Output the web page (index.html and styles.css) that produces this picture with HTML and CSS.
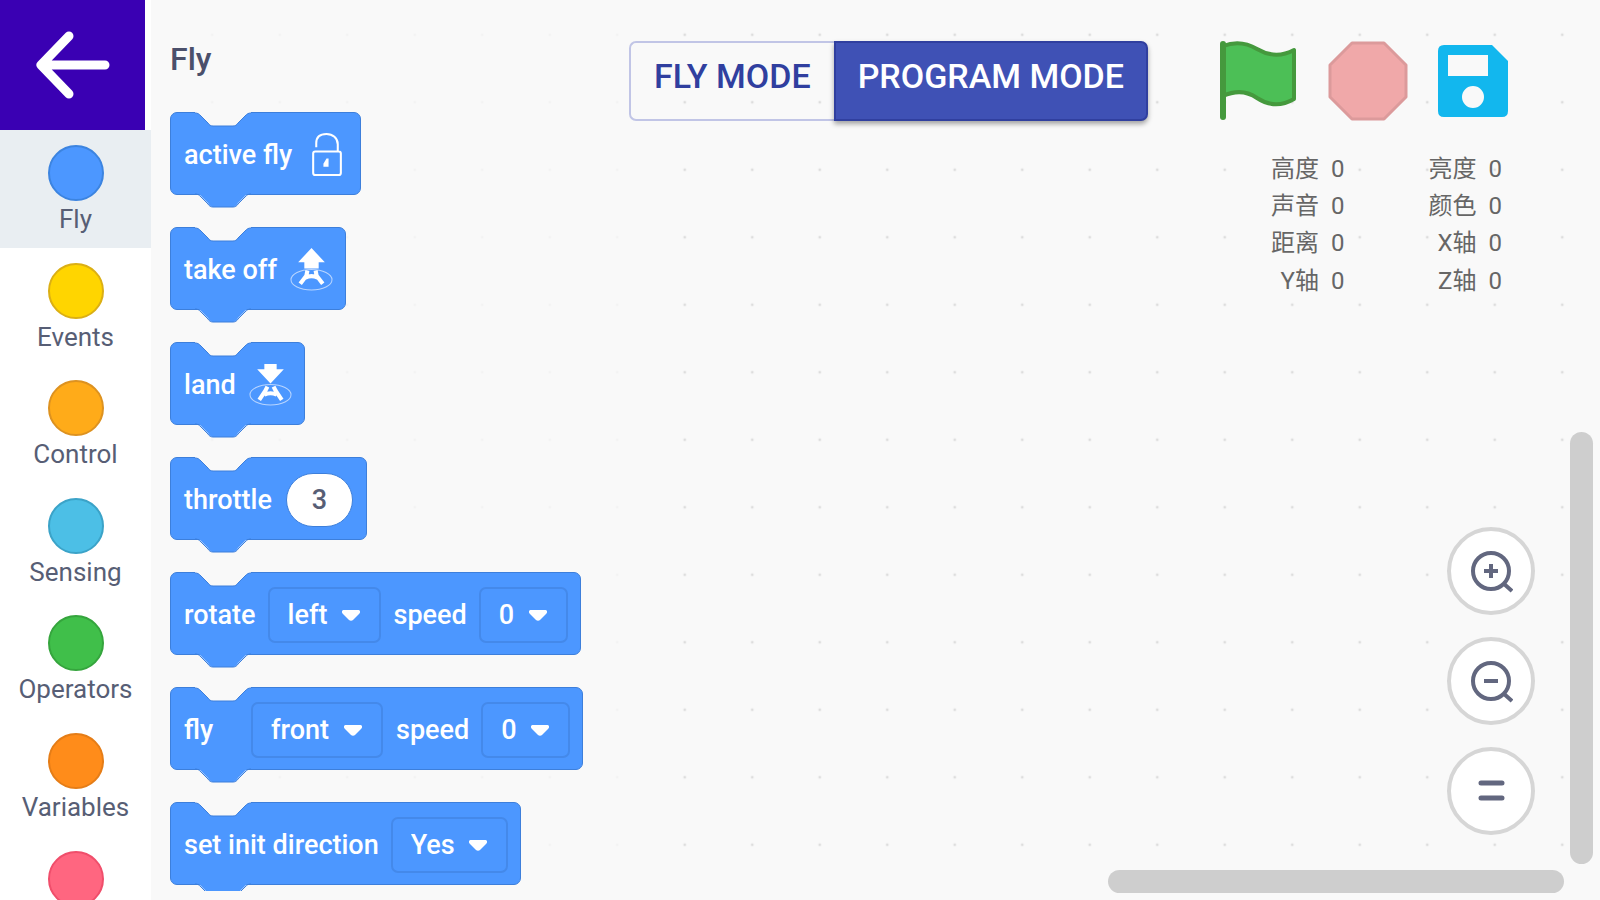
FILE: index.html
```html
<!DOCTYPE html>
<html lang="en">
<head>
  <meta charset="UTF-8">
  <meta name="viewport" content="width=device-width, initial-scale=1">
  <title>Program Mode</title>
  <link rel="stylesheet" href="styles.css">
</head>
<body>

<!-- shared shapes -->
<svg class="defs" aria-hidden="true">
  <symbol id="notch" viewBox="0 0 56 15">
    <path class="notch-fill" d="M0 0H56V1C53 1 52 2 50 4L43 11C42 13 40 14 38 14H18C16 14 14 13 13 11L6 4C4 2 3 1 0 1Z" />
    <path class="outline" d="M0 1C3 1 4 2 6 4L13 11C14 13 16 14 18 14H38C40 14 42 13 43 11L50 4C52 2 53 1 56 1" />
  </symbol>
  <symbol id="tab" viewBox="0 0 56 15">
    <path class="tab-fill" d="M0 0H56C53 0 52 1 50 3L43 10C42 12 40 14 38 14H18C16 14 14 12 13 10L6 3C4 1 3 0 0 0Z" />
    <path class="outline" d="M0 1C3 1 4 2 6 4L13 11C14 13 16 14 18 14H38C40 14 42 13 43 11L50 4C52 2 53 1 56 1" />
  </symbol>
  <symbol id="caret" viewBox="0 0 18 11">
    <path fill="#fff" d="M2 0H16C18 0 19 2 17 4L11 10C10 11 8 11 7 10L1 4C-1 2 0 0 2 0Z" />
  </symbol>
</svg>

<nav class="sidebar">
  <button class="back" aria-label="Back">
    <svg viewBox="0 0 76 68" width="76" height="68">
      <path d="M70 34H6M34 5L6 34L34 63" />
    </svg>
  </button>
  <ul class="categories">
    <li><button class="category selected"><span class="dot fly"></span>Fly</button></li>
    <li><button class="category"><span class="dot events"></span>Events</button></li>
    <li><button class="category"><span class="dot control"></span>Control</button></li>
    <li><button class="category"><span class="dot sensing"></span>Sensing</button></li>
    <li><button class="category"><span class="dot operators"></span>Operators</button></li>
    <li><button class="category"><span class="dot variables"></span>Variables</button></li>
    <li><button class="category" aria-label="My Blocks"><span class="dot my-blocks"></span></button></li>
  </ul>
</nav>

<main class="workspace">
  <svg class="grid" aria-hidden="true">
    <defs>
      <pattern id="dots" width="27" height="27" patternUnits="userSpaceOnUse" patternTransform="translate(-40 1) scale(2.5)">
        <rect x="13" y="13" width="1" height="1" fill="#ddd" />
      </pattern>
    </defs>
    <rect width="100%" height="100%" fill="url(#dots)" />
  </svg>

  <section class="flyout">
    <h2>Fly</h2>
    <div class="block">
      <svg class="notch"><use href="#notch" /></svg>
      <span>active fly</span>
      <svg class="icon" viewBox="0 0 40 40">
        <path fill="none" stroke="#fff" stroke-width="2" d="M10 13V9C10 3 14 0 20 0S31 4 31 10V17M9 17H32Q34 17 34 19V38Q34 40 32 40H9Q7 40 7 38V19Q7 17 9 17Z" />
        <path fill="#fff" d="M20 24H22V32H17V29Z" />
      </svg>
      <svg class="tab"><use href="#tab" /></svg>
    </div>
    <div class="block">
      <svg class="notch"><use href="#notch" /></svg>
      <span>take off</span>
      <svg class="icon" viewBox="0 0 40 40">
        <ellipse cx="20" cy="30" rx="20" ry="10" fill="none" stroke="#b8d5ff" stroke-width="1" />
        <path fill="#fff" d="M20 -1L33 13H27V19H13V13H7Z" />
        <path fill="none" stroke="#fff" stroke-width="4" d="M16 21L15 26L9 34M24 21L25 26L31 34M14 28Q20 25 26 28" />
      </svg>
      <svg class="tab"><use href="#tab" /></svg>
    </div>
    <div class="block">
      <svg class="notch"><use href="#notch" /></svg>
      <span>land</span>
      <svg class="icon" viewBox="0 0 40 40">
        <ellipse cx="20" cy="30" rx="20" ry="10" fill="none" stroke="#b8d5ff" stroke-width="1" />
        <path fill="#fff" d="M14 0H26V5H33L20 19L7 5H14Z" />
        <path fill="none" stroke="#fff" stroke-width="4" d="M17 22L15 26L9 35M23 22L25 26L31 35M14 30Q20 27 26 30" />
      </svg>
      <svg class="tab"><use href="#tab" /></svg>
    </div>
    <div class="block">
      <svg class="notch"><use href="#notch" /></svg>
      <label for="throttle">throttle</label>
      <input id="throttle" class="number" type="text" value="3">
      <svg class="tab"><use href="#tab" /></svg>
    </div>
    <div class="block">
      <svg class="notch"><use href="#notch" /></svg>
      <label for="rotate-dir">rotate</label>
      <span class="dropdown">
        <select id="rotate-dir"><option>left</option></select>
        <svg><use href="#caret" /></svg>
      </span>
      <label for="rotate-speed">speed</label>
      <span class="dropdown">
        <select id="rotate-speed"><option>0</option></select>
        <svg><use href="#caret" /></svg>
      </span>
      <svg class="tab"><use href="#tab" /></svg>
    </div>
    <div class="block">
      <svg class="notch"><use href="#notch" /></svg>
      <label class="short" for="fly-dir">fly</label>
      <span class="dropdown">
        <select id="fly-dir"><option>front</option></select>
        <svg><use href="#caret" /></svg>
      </span>
      <label for="fly-speed">speed</label>
      <span class="dropdown">
        <select id="fly-speed"><option>0</option></select>
        <svg><use href="#caret" /></svg>
      </span>
      <svg class="tab"><use href="#tab" /></svg>
    </div>
    <div class="block">
      <svg class="notch"><use href="#notch" /></svg>
      <label for="init-dir">set init direction</label>
      <span class="dropdown">
        <select id="init-dir"><option>Yes</option></select>
        <svg><use href="#caret" /></svg>
      </span>
      <svg class="tab"><use href="#tab" /></svg>
    </div>
  </section>

  <div class="overlay">
    <div class="toolbar">
      <div class="modes">
        <button class="mode">FLY MODE</button>
        <button class="mode active">PROGRAM MODE</button>
      </div>
      <button class="tool" aria-label="Start">
        <svg viewBox="0 0 80 80" width="80" height="80">
          <path fill="#4cbf56" stroke="#45993d" stroke-width="4" stroke-linejoin="round" d="M5 5C18 0 29 2 39 8C51 15 63 16 76 9V58C64 65 51 65 39 57C29 50 18 49 5 55Z" />
          <path fill="none" stroke="#45993d" stroke-width="6" stroke-linecap="round" d="M5 3V76" />
        </svg>
      </button>
      <button class="tool" aria-label="Stop">
        <svg viewBox="0 0 80 80" width="80" height="80">
          <path fill="#f0a8a9" stroke="#dc9a9b" stroke-width="3" stroke-linejoin="round" d="M24 2H56L78 24V56L56 78H24L2 56V24Z" />
        </svg>
      </button>
      <button class="tool" aria-label="Save">
        <svg viewBox="0 0 70 72" width="70" height="72">
          <path fill="#12b7ee" fill-rule="evenodd" d="M6 0H54L70 16V66Q70 72 64 72H6Q0 72 0 66V6Q0 0 6 0ZM10 10V31H50V10ZM35 41A11 11 0 1 0 35 63A11 11 0 1 0 35 41Z" />
        </svg>
      </button>
    </div>
    <table class="stats" lang="zh">
      <tr><th>高度</th><td>0</td><th>亮度</th><td>0</td></tr>
      <tr><th>声音</th><td>0</td><th>颜色</th><td>0</td></tr>
      <tr><th>距离</th><td>0</td><th>X轴</th><td>0</td></tr>
      <tr><th>Y轴</th><td>0</td><th>Z轴</th><td>0</td></tr>
    </table>
  </div>

  <div class="zoom">
    <button aria-label="Zoom in">
      <svg viewBox="0 0 44 44" width="44" height="44"><circle cx="22" cy="22" r="18" /><path d="M34 34L43 42M22 15V29M15 22H29" /></svg>
    </button>
    <button aria-label="Zoom out">
      <svg viewBox="0 0 44 44" width="44" height="44"><circle cx="22" cy="22" r="18" /><path d="M34 34L43 42M15 22H29" /></svg>
    </button>
    <button aria-label="Reset zoom">
      <svg viewBox="0 0 44 44" width="44" height="44"><path stroke-width="5" stroke-linecap="round" d="M12 14H33M12 29H33" /></svg>
    </button>
  </div>

  <div class="scrollbar vertical"></div>
  <div class="scrollbar horizontal"></div>
</main>

</body>
</html>
```
FILE: styles.css
```css
* {
  box-sizing: border-box;
}

body {
  display: flex;
  height: 100vh;
  margin: 0;
  overflow: hidden;
  background: #f9f9f9;
  font-family: Roboto, 'Noto Sans CJK SC', sans-serif;
  color: #575e75;
}

button,
input,
select {
  font: inherit;
  color: inherit;
}

button {
  padding: 0;
  border: 0;
  background: none;
  cursor: pointer;
}

.defs {
  position: absolute;
  width: 0;
  height: 0;
}

/* categories */
.sidebar {
  display: flex;
  flex-direction: column;
  flex: none;
  width: 151px;
  overflow: hidden;
  background: #fff;
}

.back {
  flex: none;
  width: 145px;
  height: 130px;
  background: #3a00b3;
}

.back svg {
  display: block;
  margin: 0 auto;
  fill: none;
  stroke: #fff;
  stroke-width: 9;
  stroke-linecap: round;
  stroke-linejoin: round;
}

.categories {
  margin: 0;
  padding: 0;
  list-style: none;
}

.category {
  display: flex;
  flex-direction: column;
  align-items: center;
  gap: 4px;
  width: 100%;
  padding: 15px 0 14px;
  font-size: 26px;
  line-height: 1.1;
}

.category.selected {
  background: #e9eef2;
}

.dot {
  width: 56px;
  height: 56px;
  border: 2px solid;
  border-radius: 50%;
}

.fly { background: #4c97ff; border-color: #3c84e0; }
.events { background: #ffd500; border-color: #dbaf14; }
.control { background: #ffab19; border-color: #dd9220; }
.sensing { background: #4cbfe6; border-color: #3ba3c8; }
.operators { background: #40bf4a; border-color: #35a53d; }
.variables { background: #ff8c1a; border-color: #e57d17; }
.my-blocks { background: #ff6680; border-color: #f04e6b; }

/* workspace */
.workspace {
  position: relative;
  flex: 1;
  min-width: 0;
}

.grid {
  position: absolute;
  width: 100%;
  height: 100%;
}

.flyout {
  position: relative;
  width: 489px;
  height: 99%;
  padding: 40px 0 0 19px;
  overflow: hidden;
  background: rgba(249, 249, 249, 0.8);
}

.flyout h2 {
  margin: 0 0 34px;
  font-size: 32px;
  font-weight: 500;
  line-height: 38px;
  color: #4b506b;
}

.block {
  position: relative;
  display: flex;
  align-items: center;
  gap: 14px;
  width: fit-content;
  height: 83px;
  margin-bottom: 32px;
  padding: 2px 13px 0;
  border: 1px solid #3d7fdb;
  border-radius: 7px;
  background: #4c97ff;
  font-size: 27px;
  font-weight: 500;
  color: #fff;
}

.notch,
.tab {
  position: absolute;
  left: 24px;
  width: 56px;
  height: 15px;
}

.notch { top: -1px; }
.tab { top: 100%; margin-top: -1px; }
.notch-fill { fill: #f9f9f9; }
.tab-fill { fill: #4c97ff; }

.outline {
  fill: none;
  stroke: #3d7fdb;
}

.icon {
  width: 41px;
  height: 41px;
  overflow: visible;
}

.short {
  min-width: 55px;
}

.number {
  width: 67px;
  height: 54px;
  padding: 0;
  border: 1px solid #3d7fdb;
  border-radius: 27px;
  background: #fff;
  color: #575e75;
  text-align: center;
}

.dropdown {
  position: relative;
  margin: 0 -1px 0 -2px;
}

.dropdown select {
  display: block;
  height: 56px;
  padding: 0 51px 0 18px;
  border: 2px solid #4489ea;
  border-radius: 7px;
  background: none;
  appearance: none;
}

.dropdown svg {
  position: absolute;
  top: 23px;
  right: 21px;
  width: 18px;
  height: 11px;
  pointer-events: none;
}

/* controls over the canvas */
.overlay {
  position: absolute;
  top: 41px;
  right: 92px;
  display: flex;
  flex-direction: column;
  align-items: flex-end;
  gap: 30px;
}

.toolbar {
  display: flex;
  align-items: center;
  gap: 30px;
}

.modes {
  display: flex;
  margin-right: 40px;
}

.mode {
  height: 80px;
  padding: 0 23px 10px;
  border: 2px solid #c1c5e6;
  border-right: 0;
  border-radius: 7px 0 0 7px;
  font-size: 34px;
  font-weight: 500;
  color: #303f9f;
}

.mode.active {
  padding: 0 22px 10px;
  border: 2px solid #303f9f;
  border-radius: 0 7px 7px 0;
  background: #3f51b5;
  box-shadow: 0 3px 5px rgba(0, 0, 0, 0.35);
  color: #fff;
}

.tool svg {
  display: block;
}

.stats {
  margin-right: 6px;
  border-collapse: collapse;
  font-size: 24px;
  line-height: 1.55;
  color: #666;
}

.stats th,
.stats td {
  padding: 0;
  font-weight: 400;
  text-align: right;
}

.stats th {
  min-width: 132px;
}

.stats td {
  padding-left: 12px;
}

.zoom {
  position: absolute;
  right: 65px;
  bottom: 65px;
  display: flex;
  flex-direction: column;
  gap: 22px;
}

.zoom button {
  display: flex;
  align-items: center;
  justify-content: center;
  width: 88px;
  height: 88px;
  border: 4px solid #d6d6d6;
  border-radius: 50%;
  background: #fff;
}

.zoom svg {
  fill: none;
  stroke: #62677f;
  stroke-width: 4;
}

.scrollbar {
  position: absolute;
  border-radius: 12px;
  background: #cecece;
}

.vertical {
  top: 48%;
  right: 7px;
  width: 23px;
  height: 48%;
}

.horizontal {
  right: 36px;
  bottom: 7px;
  width: 456px;
  height: 23px;
}
```
